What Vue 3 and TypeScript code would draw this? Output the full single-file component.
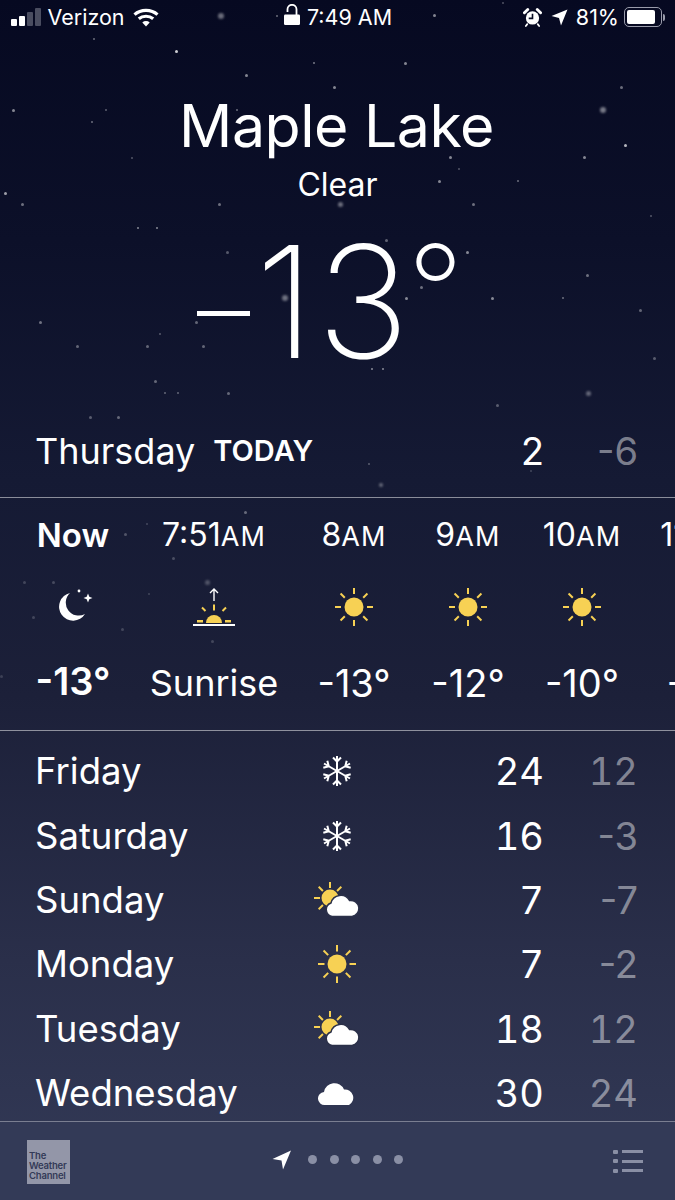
<script setup lang="ts">
interface Hour { label: string; suffix: string; icon: string; temp: string; width: number; bold?: boolean }
interface Day { name: string; icon: string; high: string; low: string }

const hours: Hour[] = [
  { label: 'Now', suffix: '', icon: 'moon', temp: '-13°', width: 116, bold: true },
  { label: '7:51', suffix: 'AM', icon: 'sunrise', temp: 'Sunrise', width: 166 },
  { label: '8', suffix: 'AM', icon: 'sun', temp: '-13°', width: 114 },
  { label: '9', suffix: 'AM', icon: 'sun', temp: '-12°', width: 114 },
  { label: '10', suffix: 'AM', icon: 'sun', temp: '-10°', width: 114 },
  { label: '11', suffix: 'AM', icon: 'sun', temp: '-9°', width: 114 },
]
const days: Day[] = [
  { name: 'Friday', icon: 'snow', high: '24', low: '12' },
  { name: 'Saturday', icon: 'snow', high: '16', low: '-3' },
  { name: 'Sunday', icon: 'partly', high: '7', low: '-7' },
  { name: 'Monday', icon: 'sun', high: '7', low: '-2' },
  { name: 'Tuesday', icon: 'partly', high: '18', low: '12' },
  { name: 'Wednesday', icon: 'cloud', high: '30', low: '24' },
]
const stars: number[][] = [
  [218,13,6,.4],[276,15,2,.4],[93,38,2,.4],[433,14,3,.5],[502,2,2,.3],
  [175,50,3,.8],[313,62,2,.45],[404,62,3,.5],[245,74,3,.5],[333,86,3,.5],[620,86,3,.4],[600,107,6,.45],[12,109,3,.5],[105,109,2,.35],[91,121,2,.4],[236,109,2,.4],
  [624,144,3,.7],[583,156,3,.5],[449,156,3,.5],[131,157,2,.3],[458,168,2,.3],[438,180,3,.5],[517,180,2,.4],[4,192,3,.6],[21,203,3,.4],[218,203,3,.4],[338,202,5,.4],[472,203,3,.4],[650,215,2,.3],
  [137,227,2,.5],[156,227,2,.5],[385,239,3,.35],[226,251,3,.3],[466,251,3,.5],[586,274,3,.4],[420,286,3,.4],[282,295,6,.4],[405,297,3,.5],[491,297,3,.5],[562,297,2,.4],[639,309,3,.35],
  [39,321,3,.4],[195,321,3,.35],[159,333,2,.3],[76,345,3,.35],[146,345,3,.35],[202,345,3,.35],[653,357,3,.3],[371,368,2,.5],[382,368,2,.5],[154,380,3,.35],[164,392,2,.35],[177,392,2,.35],[227,392,3,.35],[586,391,5,.35],[496,404,3,.3],[89,416,3,.3],[117,416,3,.35],
  [368,463,2,.3],[379,483,4,.35],[530,470,2,.2],[244,511,3,.35],[146,523,2,.2],[124,533,3,.25],[172,557,3,.22],[205,580,5,.25],[52,581,3,.2],[23,581,3,.18],[148,593,2,.18],[32,616,3,.18],[121,628,3,.18],[211,640,3,.18],[0,675,3,.15],
]
function starStyle(s: number[]) {
  return { left: s[0] + 'px', top: s[1] + 'px', width: s[2] + 'px', height: s[2] + 'px', opacity: s[3] }
}
const rays = [0, 45, 90, 135, 180, 225, 270, 315]
</script>

<template>
  <div class="phone">
    <div class="sky">
      <i v-for="(s, i) in stars" :key="i" class="star" :class="{ hazy: s[2] > 3 }" :style="starStyle(s)"></i>
    </div>

    <header class="status">
      <div class="status-side">
        <div class="signal"><i class="on b1"></i><i class="on b2"></i><i class="b3"></i><i class="b4"></i></div>
        <span class="carrier">Verizon</span>
        <svg class="wifi" width="26" height="19" viewBox="0 0 26 19" fill="none" stroke="#fff" stroke-width="3.2">
          <path d="M1.5 6.6C7.8 1 18.2 1 24.5 6.6" />
          <path d="M5.8 10.8C9.8 7.4 16.2 7.4 20.2 10.8" />
          <path d="M13 18.4l-3.7-4a5.4 5.4 0 0 1 7.4 0z" fill="#fff" stroke="none" />
        </svg>
      </div>
      <div class="status-mid">
        <svg class="lock" width="16" height="21" viewBox="0 0 16 21"><path d="M3.500 8V5.300a4.500 4.500 0 0 1 9 0V11" fill="none" stroke="#fff" stroke-width="1.800" /><rect x="0" y="10.500" width="16" height="10.500" rx="1.200" fill="#fff" /></svg>
        <span>7:49 AM</span>
      </div>
      <div class="status-side right">
        <svg width="19" height="20" viewBox="0 0 20 20">
          <path d="M1.500 5.500L5 2M18.500 5.500L15 2" stroke="#fff" stroke-width="3" stroke-linecap="round" />
          <path d="M4.500 17.500l-1.500 2M15.500 17.500l1.500 2" stroke="#fff" stroke-width="1.800" stroke-linecap="round" />
          <circle cx="10" cy="11" r="7" fill="#fff" />
          <path d="M10 6.500v5H6" fill="none" stroke="#0a0d25" stroke-width="1.700" />
        </svg>
        <svg class="arrow" width="17" height="17" viewBox="0 0 17 17"><path d="M16.500.5L10 16.500 8 9 .5 7z" fill="#fff" /></svg>
        <span class="pct">81%</span>
        <div class="battery"><div class="fill"></div></div><i class="nub"></i>
      </div>
    </header>

    <section class="hero">
      <h1 class="city">Maple Lake</h1>
      <div class="cond">Clear</div>
      <div class="temp"><span class="minus"></span><span class="one">1</span><span class="three">3</span><span class="deg">°</span></div>
    </section>

    <section class="today">
      <span class="today-name">Thursday</span>
      <span class="today-tag">TODAY</span>
      <span class="hi">2</span>
      <span class="lo neg">-6</span>
    </section>

    <section class="hourly">
      <div v-for="h in hours" :key="h.label" class="hour" :style="{ width: h.width + 'px' }">
        <div class="hour-label" :class="{ bold: h.bold }">{{ h.label }}<small v-if="h.suffix">{{ h.suffix }}</small></div>
        <div class="hour-icon">
          <svg v-if="h.icon === 'moon'" width="40" height="40" viewBox="0 0 40 40">
            <path d="M17 8A14 14 0 1 0 32 29 13 13 0 0 1 17 8z" fill="#fff" />
            <circle cx="26" cy="6" r="1.400" fill="#fff" />
            <path d="M35 8.500l1.300 3.200 3.200 1.300-3.200 1.300L35 17.500l-1.300-3.200-3.200-1.300 3.200-1.300z" fill="#fff" />
          </svg>
          <svg v-else-if="h.icon === 'sunrise'" width="42" height="42" viewBox="0 0 42 42">
            <path d="M21 15V3M17 7l4-4 4 4" fill="none" stroke="#fff" stroke-width="1.400" />
            <path d="M21 18.500v6M9 21.500l3.500 3.500M33 21.500l-3.500 3.500" stroke="#f7d154" stroke-width="2" fill="none" />
            <path d="M13 37a8 8 0 0 1 16 0z" fill="#f7d154" />
            <rect x="4" y="34" width="6" height="2.500" fill="#f7d154" /><rect x="32" y="34" width="6" height="2.500" fill="#f7d154" />
            <rect x="0" y="38" width="42" height="2" fill="#fff" />
          </svg>
          <svg v-else width="40" height="40" viewBox="-20 -20 40 40">
            <circle r="9.500" fill="#f7d154" />
            <rect v-for="r in rays" :key="r" x="-1" y="-19" width="2" height="6" fill="#f7d154" :transform="`rotate(${r})`" />
          </svg>
        </div>
        <div class="hour-temp" :class="{ bold: h.bold, word: h.temp === 'Sunrise' }">{{ h.temp }}</div>
      </div>
    </section>

    <section class="days">
      <div v-for="d in days" :key="d.name" class="day">
        <span class="day-name">{{ d.name }}</span>
        <div class="day-icon">
          <svg v-if="d.icon === 'snow'" width="32" height="32" viewBox="-16 -16 32 32" fill="none" stroke="#fff" stroke-width="2">
            <g v-for="r in [0, 60, 120, 180, 240, 300]" :key="r" :transform="`rotate(${r})`">
              <path d="M0 0V-15M-4 -13.500L0 -9.500L4 -13.500" />
            </g>
          </svg>
          <svg v-else-if="d.icon === 'sun'" width="38" height="38" viewBox="-19 -19 38 38">
            <circle r="9.500" fill="#f7d154" />
            <rect v-for="r in rays" :key="r" x="-1" y="-19" width="2" height="6.500" fill="#f7d154" :transform="`rotate(${r})`" />
          </svg>
          <svg v-else-if="d.icon === 'partly'" width="47" height="38" viewBox="0 0 47 38">
            <circle cx="17" cy="17" r="8.500" fill="#f7d154" />
            <g fill="#f7d154">
              <rect x="16" y="1" width="2" height="6" /><rect x="1" y="16" width="6" height="2" />
              <rect x="16" y="1" width="2" height="6" transform="rotate(45 17 17)" />
              <rect x="16" y="1" width="2" height="6" transform="rotate(-45 17 17)" />
              <rect x="16" y="1" width="2" height="6" transform="rotate(-135 17 17)" />
            </g>
            <path d="M19 35.500A7 7 0 0 1 18 22 10 10 0 0 1 36.500 19.500 8 8 0 0 1 39 35.500z" fill="#fff" stroke="#2b3049" stroke-width="1.500" />
          </svg>
          <svg v-else class="solo-cloud" width="38" height="26" viewBox="0 0 38 26">
            <path d="M7 25A6.500 6.500 0 0 1 6 12 10.500 10.500 0 0 1 26 9.500 8.300 8.300 0 0 1 31 25z" fill="#fff" />
          </svg>
        </div>
        <span class="hi">{{ d.high }}</span>
        <span class="lo" :class="{ neg: d.low.startsWith('-') }">{{ d.low }}</span>
      </div>
    </section>

    <footer class="footer">
      <div class="logo">The<br />Weather<br />Channel</div>
      <div class="pager">
        <svg width="20" height="20" viewBox="0 0 20 20"><path d="M19 .5L11 19.500 9.500 10.500 .5 9z" fill="#fff" /></svg>
        <i class="dot"></i><i class="dot"></i><i class="dot"></i><i class="dot"></i><i class="dot"></i>
      </div>
      <div class="list">
        <div v-for="n in 3" :key="n" class="list-row"><i class="bullet"></i><i class="line"></i></div>
      </div>
    </footer>
  </div>
</template>

<style>
html, body { margin: 0; background: #333a57; }
</style>

<style scoped>
.phone {
  position: relative;
  width: 675px;
  height: 1200px;
  overflow: hidden;
  display: flex;
  flex-direction: column;
  color: #fff;
  font-family: Inter, "Liberation Sans", sans-serif;
  background: linear-gradient(180deg, #060921 0%, #0c1029 20%, #151a34 40%, #1c2039 58%, #2a2f4a 80%, #333a57 100%);
}
.sky { position: absolute; inset: 0; pointer-events: none; }
.star { position: absolute; border-radius: 50%; background: #fff; }
.hazy { filter: blur(1px); }

.status {
  position: relative;
  height: 36px;
  flex: none;
  box-sizing: border-box;
  display: grid;
  grid-template-columns: 1fr auto 1fr;
  align-items: center;
  font-size: 21.500px;
  padding: 0 10px 2px 11px;
}
.status-side { display: flex; align-items: center; }
.status-side.right { justify-content: flex-end; }
.status-mid { display: flex; align-items: center; gap: 7px; }
.lock { margin-top: -5px; }
.signal { display: flex; align-items: flex-end; gap: 2.500px; height: 18px; margin-right: 7px; }
.signal i { width: 5.500px; border-radius: 1px; background: #4a4d60; }
.signal .on { background: #fff; }
.b1 { height: 7px; } .b2 { height: 10px; } .b3 { height: 14px; } .b4 { height: 18px; }
.wifi { margin-left: 8px; }
.arrow { margin-left: 9px; }
.pct { margin-left: 8px; }
.battery {
  width: 38px; height: 20px; margin-left: 5px; box-sizing: border-box;
  border: 1.500px solid #9a9cab; border-radius: 5px; padding: 2px;
}
.fill { width: 88%; height: 100%; background: #fff; border-radius: 2px; }
.nub { width: 2px; height: 7px; margin-left: 1px; background: #9a9cab; border-radius: 0 2px 2px 0; }

.hero { position: relative; flex: none; height: 361px; display: flex; flex-direction: column; align-items: center; }
.city { margin: 54px 0 0 -2px; font-size: 59px; line-height: 72px; font-weight: 400; letter-spacing: -0.500px; }
.cond { font-size: 32px; line-height: 40px; margin-top: 3px; }
.temp { display: flex; align-items: flex-start; font-size: 156px; line-height: 160px; font-weight: 200; margin: 17px 0 0 -11px; }
.minus { width: 53px; height: 5px; background: #fff; margin: 89px 5px 0 -3px; }
.one { letter-spacing: 2px; }
.three { letter-spacing: -2px; }
.deg { font-size: 124px; line-height: 128px; margin-top: 3px; }

.today {
  position: relative; flex: none; height: 101px; box-sizing: border-box;
  display: grid; grid-template-columns: auto 1fr 94px 93px; align-items: center;
  padding: 7px 37px 0 35px; font-size: 36px; border-bottom: 1px solid rgba(255,255,255,.5);
}
.today-tag { font-size: 29px; font-weight: 600; margin-left: 18px; }
.hi { text-align: right; font-size: 38px; font-variant-numeric: tabular-nums; }
.lo { text-align: right; font-size: 38px; color: rgba(255,255,255,.45); font-variant-numeric: tabular-nums; }
.lo.neg { font-variant-numeric: normal; }

.hourly {
  position: relative; flex: none; height: 233px; box-sizing: border-box;
  display: flex; padding-left: 15px; border-bottom: 1px solid rgba(255,255,255,.5);
}
.hour { flex: none; display: flex; flex-direction: column; align-items: center; white-space: nowrap; }
.hour-label { font-size: 32px; line-height: 40px; margin-top: 17px; }
.hour-label.bold { font-size: 33px; }
.hour-label small { font-size: 27px; letter-spacing: 1.200px; }
.hour-icon { height: 50px; margin-top: 25px; display: flex; align-items: center; justify-content: center; }
.hour-temp { font-size: 38px; line-height: 44px; margin-top: 29px; }
.hour-temp.word { font-size: 36px; }
.bold { font-weight: 600; }

.days { position: relative; flex: none; height: 390px; padding-top: 8px; box-sizing: border-box; }
.day {
  height: 64.400px; display: grid; grid-template-columns: 250px 102px 1fr 93px;
  align-items: center; padding: 0 37px 0 35px;
}
.day-name { font-size: 36.500px; }
.day-icon { display: flex; justify-content: center; margin-left: 1px; }
.day .hi { padding-right: 1px; }
.solo-cloud { margin-left: 1px; }

.footer {
  position: relative; flex: none; height: 79px; box-sizing: border-box;
  background: #333a57; border-top: 1px solid rgba(255,255,255,.35);
  display: grid; grid-template-columns: 1fr auto 1fr; align-items: center; padding: 0 27px;
}
.logo {
  width: 43px; height: 44px; box-sizing: border-box; padding: 11px 0 0 2px; background: #9396a8; color: #333a57;
  font-size: 9.500px; line-height: 10px; letter-spacing: -0.200px; font-weight: 600; margin-top: 2px; white-space: nowrap;
}
.pager { display: flex; align-items: center; gap: 12.600px; margin-top: -3px; }
.pager svg { margin-right: 4px; }
.dot { width: 9px; height: 9px; border-radius: 50%; background: #8a8fa5; }
.list { justify-self: end; display: flex; flex-direction: column; gap: 5.500px; margin-right: 5px; }
.list-row { display: flex; align-items: center; gap: 4px; }
.bullet { width: 5px; height: 4px; border-radius: 1px; background: #8a8fa5; }
.line { width: 21px; height: 3px; background: #8a8fa5; }
</style>
